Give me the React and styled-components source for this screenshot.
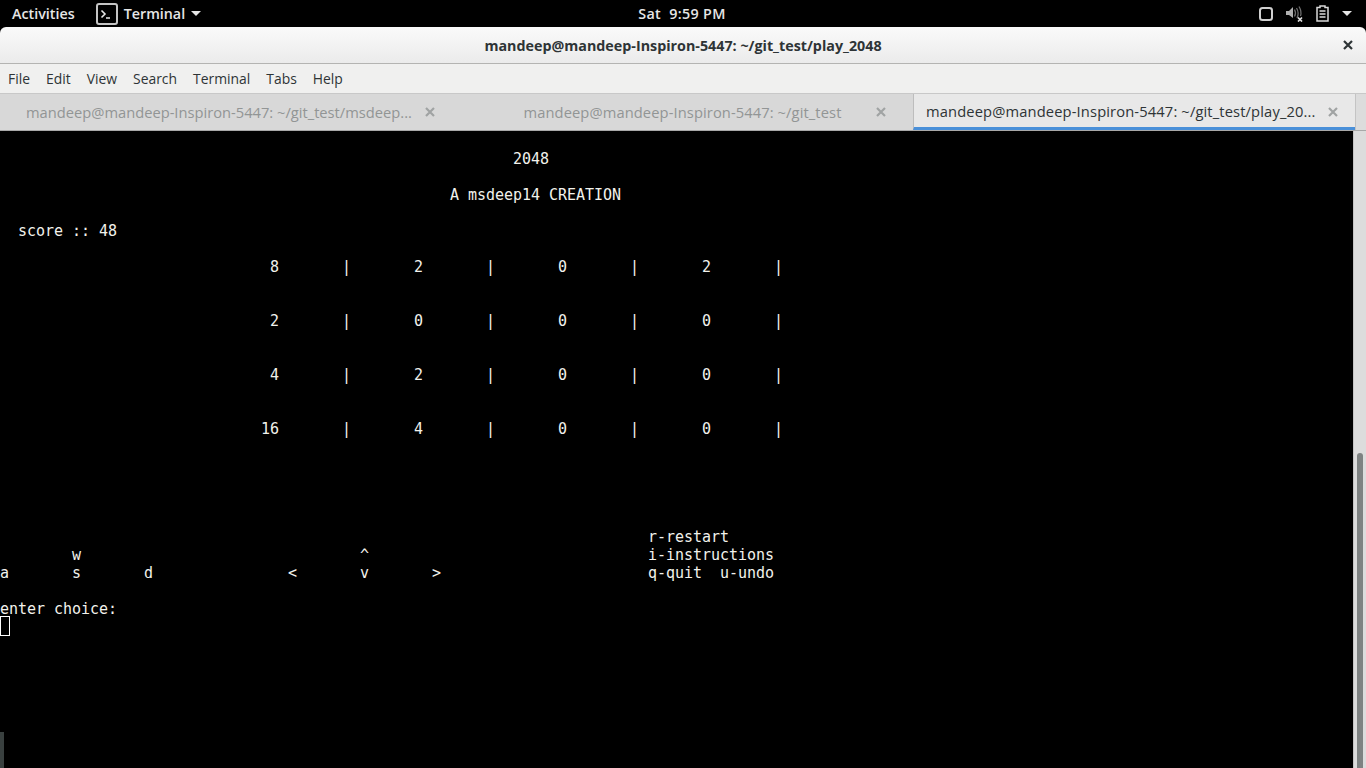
import styled, { createGlobalStyle } from "styled-components";

const GlobalStyle = createGlobalStyle`
  html, body {
    margin: 0;
    height: 100%;
    background: #000;
    overflow: hidden;
  }
`;

const Screen = styled.div`
  width: 1366px;
  height: 768px;
  display: flex;
  flex-direction: column;
  background: #000;
  font-family: "Open Sans", "Noto Sans", sans-serif;
  overflow: hidden;
`;

const TopBar = styled.div`
  height: 27px;
  flex: none;
  display: grid;
  grid-template-columns: 1fr auto 1fr;
  align-items: center;
  padding: 0 14px 0 12px;
  color: #e6e6e6;
  font-size: 14.3px;
  font-weight: 600;
`;

const BarSide = styled.div`
  display: flex;
  align-items: center;
  gap: ${(props) => props.$gap || 0}px;
  justify-content: ${(props) => (props.$end ? "flex-end" : "flex-start")};
`;

const AppName = styled.div`
  display: flex;
  align-items: center;
  gap: 6px;
  margin-left: 21px;
`;

const Caret = styled.span`
  width: 0;
  height: 0;
  border-left: 5px solid transparent;
  border-right: 5px solid transparent;
  border-top: 5px solid #e6e6e6;
`;

const Clock = styled.div`
  text-align: center;
  white-space: pre;
  letter-spacing: 0.35px;
`;

const Window = styled.div`
  flex: 1;
  display: flex;
  flex-direction: column;
  min-height: 0;
`;

const TitleBar = styled.div`
  height: 36px;
  flex: none;
  border-radius: 6px 6px 0 0;
  border-bottom: 1px solid #b4b4b2;
  background: linear-gradient(#fafafa, #ebebeb);
  display: flex;
  align-items: center;
  justify-content: center;
  position: relative;
  color: #2e3436;
  font-size: 14.3px;
  font-weight: 700;
`;

const CloseButton = styled.span`
  position: absolute;
  right: 13px;
  top: 13px;
  line-height: 0;
`;

const MenuBar = styled.div`
  height: 29px;
  flex: none;
  display: flex;
  align-items: center;
  gap: 16px;
  padding: 0 8px;
  background: #f0f0ef;
  color: #2e3436;
  font-size: 13.9px;
`;

const TabStrip = styled.div`
  height: 38px;
  flex: none;
  display: flex;
  background: #d8d8d8;
  border-top: 1px solid #c8c8c8;
  border-bottom: 1px solid #a8a8a8;
  box-sizing: border-box;
`;

const Tab = styled.div`
  box-sizing: border-box;
  width: ${(props) => props.$width}px;
  display: flex;
  align-items: center;
  justify-content: ${(props) => (props.$centered ? "center" : "flex-start")};
  position: relative;
  padding-left: ${(props) => props.$inset}px;
  font-size: 14.7px;
  letter-spacing: ${(props) => props.$tracking || 0}px;
  color: ${(props) => (props.$active ? "#2e3436" : "#929595")};
  background: ${(props) => (props.$active ? "#e8e8e8" : "transparent")};
  border-left: ${(props) => (props.$active ? "1px solid #bdbdbd" : "none")};
  border-bottom: ${(props) => (props.$active ? "3px solid #4a90d9" : "none")};
  white-space: nowrap;
`;

const TabClose = styled.span`
  position: absolute;
  right: ${(props) => props.$right}px;
  top: 13px;
  line-height: 0;
`;

const ScrollCap = styled.div`
  flex: 1;
  background: #dcdcdc;
  border-left: 1px solid #c4c4c4;
`;

const Body = styled.div`
  flex: 1;
  display: flex;
  min-height: 0;
`;

const Term = styled.pre`
  flex: 1;
  margin: 0;
  padding-top: 1px;
  position: relative;
  color: #f2f2ec;
  font-family: "DejaVu Sans Mono", "Liberation Mono", monospace;
  font-size: 15px;
  letter-spacing: -0.03px;
  line-height: 18px;
`;

const Cursor = styled.span`
  display: inline-block;
  box-sizing: border-box;
  width: 10px;
  height: 20px;
  margin-top: -2px;
  border: 1px solid #fff;
  vertical-align: top;
`;

const Scrollbar = styled.div`
  width: 13px;
  flex: none;
  background: #dcdcdc;
  border-left: 1px solid #c4c4c4;
  box-sizing: border-box;
  display: flex;
  flex-direction: column;
  justify-content: flex-end;
`;

const Thumb = styled.div`
  height: 315px;
  margin: 0 3px;
  border-radius: 4px 4px 0 0;
  background: #7e8282;
`;

const Grip = styled.div`
  position: absolute;
  left: 0;
  bottom: 0;
  width: 4px;
  height: 36px;
  background: #39403f;
`;

const TerminalGlyph = () => (
  <svg width="22" height="22" viewBox="0 0 22 22" fill="none">
    <rect x="1" y="1" width="20" height="20" rx="2" fill="#000" stroke="#c4c4c4" strokeWidth="2" />
    <path d="M5.5 7.5 L9 11 L5.5 14.5" stroke="#e6e6e6" strokeWidth="1.6" />
    <path d="M10 15 H14" stroke="#e6e6e6" strokeWidth="1.5" />
  </svg>
);

const CrossIcon = ({ color = "#2e3436", weight = 2.2 }) => (
  <svg width="10" height="10" viewBox="0 0 10 10" fill="none">
    <path d="M1 1 L9 9 M9 1 L1 9" stroke={color} strokeWidth={weight} />
  </svg>
);

const NetworkIcon = () => (
  <svg width="14" height="14" viewBox="0 0 14 14" fill="none">
    <rect x="1" y="1" width="12" height="12" rx="2.5" stroke="#d0d0d0" strokeWidth="2" />
  </svg>
);

const VolumeIcon = () => (
  <svg width="17" height="16" viewBox="0 0 17 16" fill="none">
    <path d="M0 5 H3 L7 1 V12 L3 9 H0 Z" fill="#b0b0b0" />
    <path d="M8.5 3.5 Q10.5 7 8.5 10.5 M10.5 2 Q13.5 7 11 12 M13 0.5 Q16 5.5 14.5 10" stroke="#6e6e6e" strokeWidth="1.3" />
    <path d="M12 11.5 L16 15.5 M16 11.5 L12 15.5" stroke="#e0e0e0" strokeWidth="1.7" />
  </svg>
);

const BatteryIcon = () => (
  <svg width="13" height="17" viewBox="0 0 13 17" fill="none">
    <path d="M4 1 H9 V2.5 H12 V16 H1 V2.5 H4 Z" stroke="#d9d9d9" strokeWidth="1.5" />
    <path d="M3.5 6 H9.5 M3.5 9 H9.5 M3.5 12 H9.5" stroke="#d9d9d9" strokeWidth="1.4" />
  </svg>
);

const blank = "";
const pad = (n) => " ".repeat(n);

const screenLines = [
  blank,
  pad(57) + "2048",
  blank,
  pad(50) + "A msdeep14 CREATION",
  blank,
  pad(2) + "score :: 48",
  blank,
  pad(30) + "8       |       2       |       0       |       2       |",
  blank,
  blank,
  pad(30) + "2       |       0       |       0       |       0       |",
  blank,
  blank,
  pad(30) + "4       |       2       |       0       |       0       |",
  blank,
  blank,
  pad(29) + "16       |       4       |       0       |       0       |",
  blank,
  blank,
  blank,
  blank,
  blank,
  pad(72) + "r-restart",
  pad(8) + "w" + pad(31) + "^" + pad(31) + "i-instructions",
  "a" + pad(7) + "s" + pad(7) + "d" + pad(15) + "<" + pad(7) + "v" + pad(7) + ">" + pad(23) + "q-quit  u-undo",
  blank,
  "enter choice:",
];

export default function App() {
  return (
    <Screen>
      <GlobalStyle />
      <TopBar>
        <BarSide>
          Activities
          <AppName>
            <TerminalGlyph />
            Terminal
            <Caret />
          </AppName>
        </BarSide>
        <Clock>Sat  9:59 PM</Clock>
        <BarSide $end $gap={13}>
          <NetworkIcon />
          <VolumeIcon />
          <BatteryIcon />
          <Caret />
        </BarSide>
      </TopBar>
      <Window>
        <TitleBar>
          mandeep@mandeep-Inspiron-5447: ~/git_test/play_2048
          <CloseButton>
            <CrossIcon />
          </CloseButton>
        </TitleBar>
        <MenuBar>
          <span>File</span>
          <span>Edit</span>
          <span>View</span>
          <span>Search</span>
          <span>Terminal</span>
          <span>Tabs</span>
          <span>Help</span>
        </MenuBar>
        <TabStrip>
          <Tab $width={447} $inset={26}>
            mandeep@mandeep-Inspiron-5447: ~/git_test/msdeep...
            <TabClose $right={12}>
              <CrossIcon color="#a0a3a3" />
            </TabClose>
          </Tab>
          <Tab $width={466} $inset={5} $tracking={0.1} $centered>
            mandeep@mandeep-Inspiron-5447: ~/git_test
            <TabClose $right={27}>
              <CrossIcon color="#a0a3a3" />
            </TabClose>
          </Tab>
          <Tab $width={442} $inset={12} $tracking={0.14} $active>
            mandeep@mandeep-Inspiron-5447: ~/git_test/play_20...
            <TabClose $right={17}>
              <CrossIcon color="#a0a3a3" />
            </TabClose>
          </Tab>
          <ScrollCap />
        </TabStrip>
        <Body>
          <Term>
            {screenLines.join("\n")}
            {"\n"}
            <Cursor />
            <Grip />
          </Term>
          <Scrollbar>
            <Thumb />
          </Scrollbar>
        </Body>
      </Window>
    </Screen>
  );
}
